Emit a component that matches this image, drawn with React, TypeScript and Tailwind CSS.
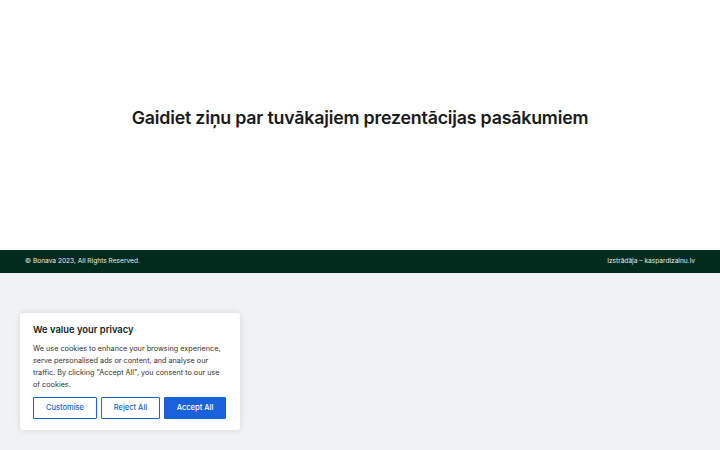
export default function App() {
  return (
    <div className="w-[720px] h-[450px] bg-[#f1f2f4] relative overflow-hidden" style={{ fontFamily: "Inter, 'Noto Sans', sans-serif" }}>
      <div className="h-[250px] bg-white flex items-center justify-center">
        <h1 className="text-[17.8px] font-semibold text-[#1a1a1a] tracking-[-0.2px] -mt-[13px]">Gaidiet ziņu par tuvākajiem prezentācijas pasākumiem</h1>
      </div>
      <div className="h-[23px] bg-[#022b1d] flex items-center justify-between px-[25px] text-[6.6px] text-[#e5ece8]">
        <span>© Bonava 2023, All Rights Reserved.</span>
        <span>Izstrādāja – kaspardizainu.lv</span>
      </div>
      <div className="absolute left-[20px] top-[313px] w-[220px] h-[117px] bg-white rounded-[3px] shadow-[0_0_6px_rgba(0,0,0,0.12)] px-[13px] pt-[10px]">
        <div className="text-[9.4px] font-semibold text-[#212121]">We value your privacy</div>
        <p className="mt-[6px] text-[7.25px] leading-[12px] text-[#333]">We use cookies to enhance your browsing experience, serve personalised ads or content, and analyse our traffic. By clicking "Accept All", you consent to our use of cookies.</p>
        <div className="mt-[6px] flex gap-[4px]">
          <button className="w-[64px] h-[22px] border-[1.5px] border-[#1863dc] text-[#1863dc] text-[7.5px] font-medium rounded-[1px] bg-white">Customise</button>
          <button className="w-[59px] h-[22px] border-[1.5px] border-[#1863dc] text-[#1863dc] text-[7.5px] font-medium rounded-[1px] bg-white">Reject All</button>
          <button className="w-[62px] h-[22px] border-[1.5px] border-[#1863dc] bg-[#1863dc] text-white text-[7.5px] font-medium rounded-[1px]">Accept All</button>
        </div>
      </div>
    </div>
  );
}
